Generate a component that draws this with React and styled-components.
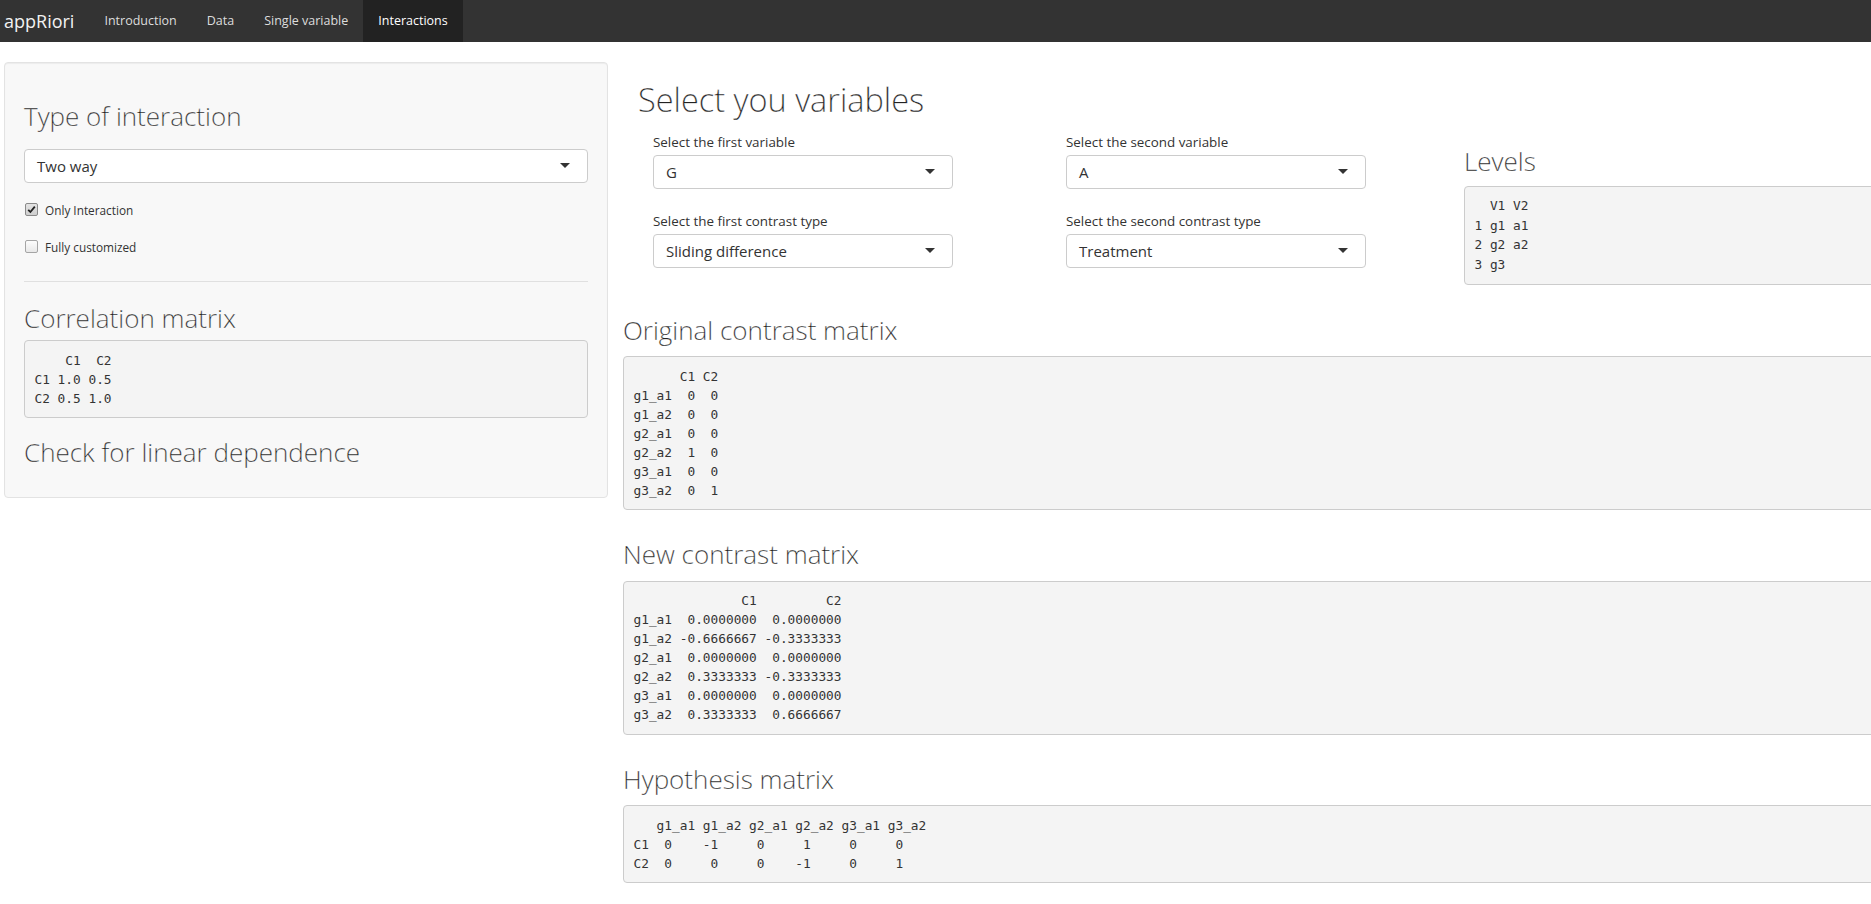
import React from "react";
import styled, { createGlobalStyle } from "styled-components";

const GlobalStyle = createGlobalStyle`
  html, body {
    margin: 0;
    padding: 0;
    overflow: hidden;
    background: #fff;
  }
  body {
    font-family: "Open Sans", Lato, sans-serif;
    font-size: 14px;
    color: #333;
  }
`;

const Navbar = styled.nav`
  display: flex;
  height: 42px;
  background: #333;
`;

const Brand = styled.div`
  padding: 0 15px 0 4px;
  line-height: 42px;
  font-size: 18px;
  color: #f2f2f2;
`;

const NavLink = styled.div`
  padding: 0 15px;
  line-height: 42px;
  font-size: 12.5px;
  color: ${(p) => (p.$active ? "#fff" : "#ddd")};
  background: ${(p) => (p.$active ? "#222" : "transparent")};
`;

const Page = styled.div`
  display: flex;
  align-items: flex-start;
  padding-top: 20px;
`;

const Well = styled.aside`
  flex: none;
  box-sizing: border-box;
  width: 604px;
  margin-left: 4px;
  padding: 19px 19px 19px;
  background: #f8f8f8;
  border: 1px solid #e3e3e3;
  border-radius: 4px;
  box-shadow: inset 0 1px 1px rgba(0, 0, 0, 0.05);
`;

const Main = styled.main`
  flex: none;
  width: 1320px;
  margin-left: 15px;
`;

const Heading = styled.h3`
  margin: 20px 0 ${(p) => p.$mb || 10}px;
  font-size: 26px;
  font-weight: 300;
  line-height: 1.1;
  color: #222;
  -webkit-text-stroke: 0.3px rgba(255, 255, 255, 0.8);
`;

const Title = styled.h2`
  margin: 20px 0 14px;
  font-size: 32.5px;
  font-weight: 300;
  line-height: 1.1;
  color: #222;
  -webkit-text-stroke: 0.35px rgba(255, 255, 255, 0.8);
`;

const Select = styled.div`
  display: flex;
  align-items: center;
  box-sizing: border-box;
  width: ${(p) => p.$width || "100%"};
  height: 34px;
  padding: 0 12px;
  margin-bottom: ${(p) => p.$mb || 0}px;
  background: #fff;
  border: 1px solid #ccc;
  border-radius: 4px;
  font-size: 15px;
  color: #333;
`;

const Caret = styled.span`
  margin-left: auto;
  margin-right: 5px;
  width: 0;
  height: 0;
  border-left: 5px solid transparent;
  border-right: 5px solid transparent;
  border-top: 5px solid #333;
`;

const CheckRow = styled.label`
  display: flex;
  align-items: center;
  gap: 7px;
  height: 20px;
  margin-bottom: 17px;
  font-size: 11.8px;
  color: #333;
`;

const Box = styled.span`
  display: flex;
  align-items: center;
  justify-content: center;
  box-sizing: border-box;
  width: 13px;
  height: 13px;
  margin-left: 1px;
  border: 1px solid ${(p) => (p.$checked ? "#8a8a8a" : "#a5a5a5")};
  border-radius: 2px;
  background: ${(p) =>
    p.$checked ? "linear-gradient(#e4e4e4, #cfcfcf)" : "linear-gradient(#fcfcfc, #e8e8e8)"};
`;

const Rule = styled.hr`
  border: 0;
  border-top: 1px solid #e0e0e0;
  margin: 24px 0 22px;
`;

const Output = styled.pre`
  margin: 0 0 10px;
  padding: 9.5px;
  font-family: "DejaVu Sans Mono", "Liberation Mono", monospace;
  font-size: 12.8px;
  line-height: ${(p) => p.$lh || 19}px;
  color: #333;
  background: #f4f4f4;
  border: 1px solid #ccc;
  border-radius: 4px;
  white-space: pre;
  overflow: hidden;
`;

const TopRow = styled.div`
  display: flex;
  align-items: flex-start;
`;

const VarBlock = styled.div`
  flex: none;
  box-sizing: border-box;
  width: 826px;
  padding-left: 15px;
`;

const SelectGrid = styled.div`
  display: grid;
  grid-template-columns: 413px 413px;
  row-gap: 22px;
  padding-left: 15px;
`;

const FieldLabel = styled.div`
  margin-bottom: 3px;
  font-size: 13.4px;
  line-height: 20px;
  color: #333;
`;

const LevelsBlock = styled.div`
  flex: 1;
  padding: 65px 0 1px 15px;
`;

const Section = styled.section`
  display: flow-root;
`;

const fields = [
  { label: "Select the first variable", value: "G" },
  { label: "Select the second variable", value: "A" },
  { label: "Select the first contrast type", value: "Sliding difference" },
  { label: "Select the second contrast type", value: "Treatment" },
];

const correlation = `    C1  C2
C1 1.0 0.5
C2 0.5 1.0`;

const levels = `  V1 V2
1 g1 a1
2 g2 a2
3 g3`;

const original = `      C1 C2
g1_a1  0  0
g1_a2  0  0
g2_a1  0  0
g2_a2  1  0
g3_a1  0  0
g3_a2  0  1`;

const newContrast = `              C1         C2
g1_a1  0.0000000  0.0000000
g1_a2 -0.6666667 -0.3333333
g2_a1  0.0000000  0.0000000
g2_a2  0.3333333 -0.3333333
g3_a1  0.0000000  0.0000000
g3_a2  0.3333333  0.6666667`;

const hypothesis = `   g1_a1 g1_a2 g2_a1 g2_a2 g3_a1 g3_a2
C1  0    -1     0     1     0     0
C2  0     0     0    -1     0     1`;

const sections = [
  { title: "Original contrast matrix", text: original },
  { title: "New contrast matrix", text: newContrast },
  { title: "Hypothesis matrix", text: hypothesis },
];

function Check({ checked, children }) {
  return (
    <CheckRow>
      <Box $checked={checked}>
        {checked && (
          <svg width="9" height="9" viewBox="0 0 9 9">
            <path d="M1.2 4.8 L3.4 7 L7.8 1.6" fill="none" stroke="#222" strokeWidth="1.8" />
          </svg>
        )}
      </Box>
      {children}
    </CheckRow>
  );
}

export default function App() {
  return (
    <>
      <GlobalStyle />
      <Navbar>
        <Brand>appRiori</Brand>
        <NavLink>Introduction</NavLink>
        <NavLink>Data</NavLink>
        <NavLink>Single variable</NavLink>
        <NavLink $active>Interactions</NavLink>
      </Navbar>
      <Page>
        <Well>
          <Heading $mb={18}>Type of interaction</Heading>
          <Select $mb={17}>
            Two way
            <Caret />
          </Select>
          <Check checked>Only Interaction</Check>
          <Check>Fully customized</Check>
          <Rule />
          <Heading $mb={8}>Correlation matrix</Heading>
          <Output>{correlation}</Output>
          <Heading $mb={11}>Check for linear dependence</Heading>
        </Well>
        <Main>
          <TopRow>
            <VarBlock>
              <Title>Select you variables</Title>
              <SelectGrid>
                {fields.map((f) => (
                  <div key={f.label}>
                    <FieldLabel>{f.label}</FieldLabel>
                    <Select $width="300px">
                      {f.value}
                      <Caret />
                    </Select>
                  </div>
                ))}
              </SelectGrid>
            </VarBlock>
            <LevelsBlock>
              <Heading>Levels</Heading>
              <Output $lh={19.5}>{levels}</Output>
            </LevelsBlock>
          </TopRow>
          {sections.map((s) => (
            <Section key={s.title}>
              <Heading $mb={12}>{s.title}</Heading>
              <Output>{s.text}</Output>
            </Section>
          ))}
        </Main>
      </Page>
    </>
  );
}
